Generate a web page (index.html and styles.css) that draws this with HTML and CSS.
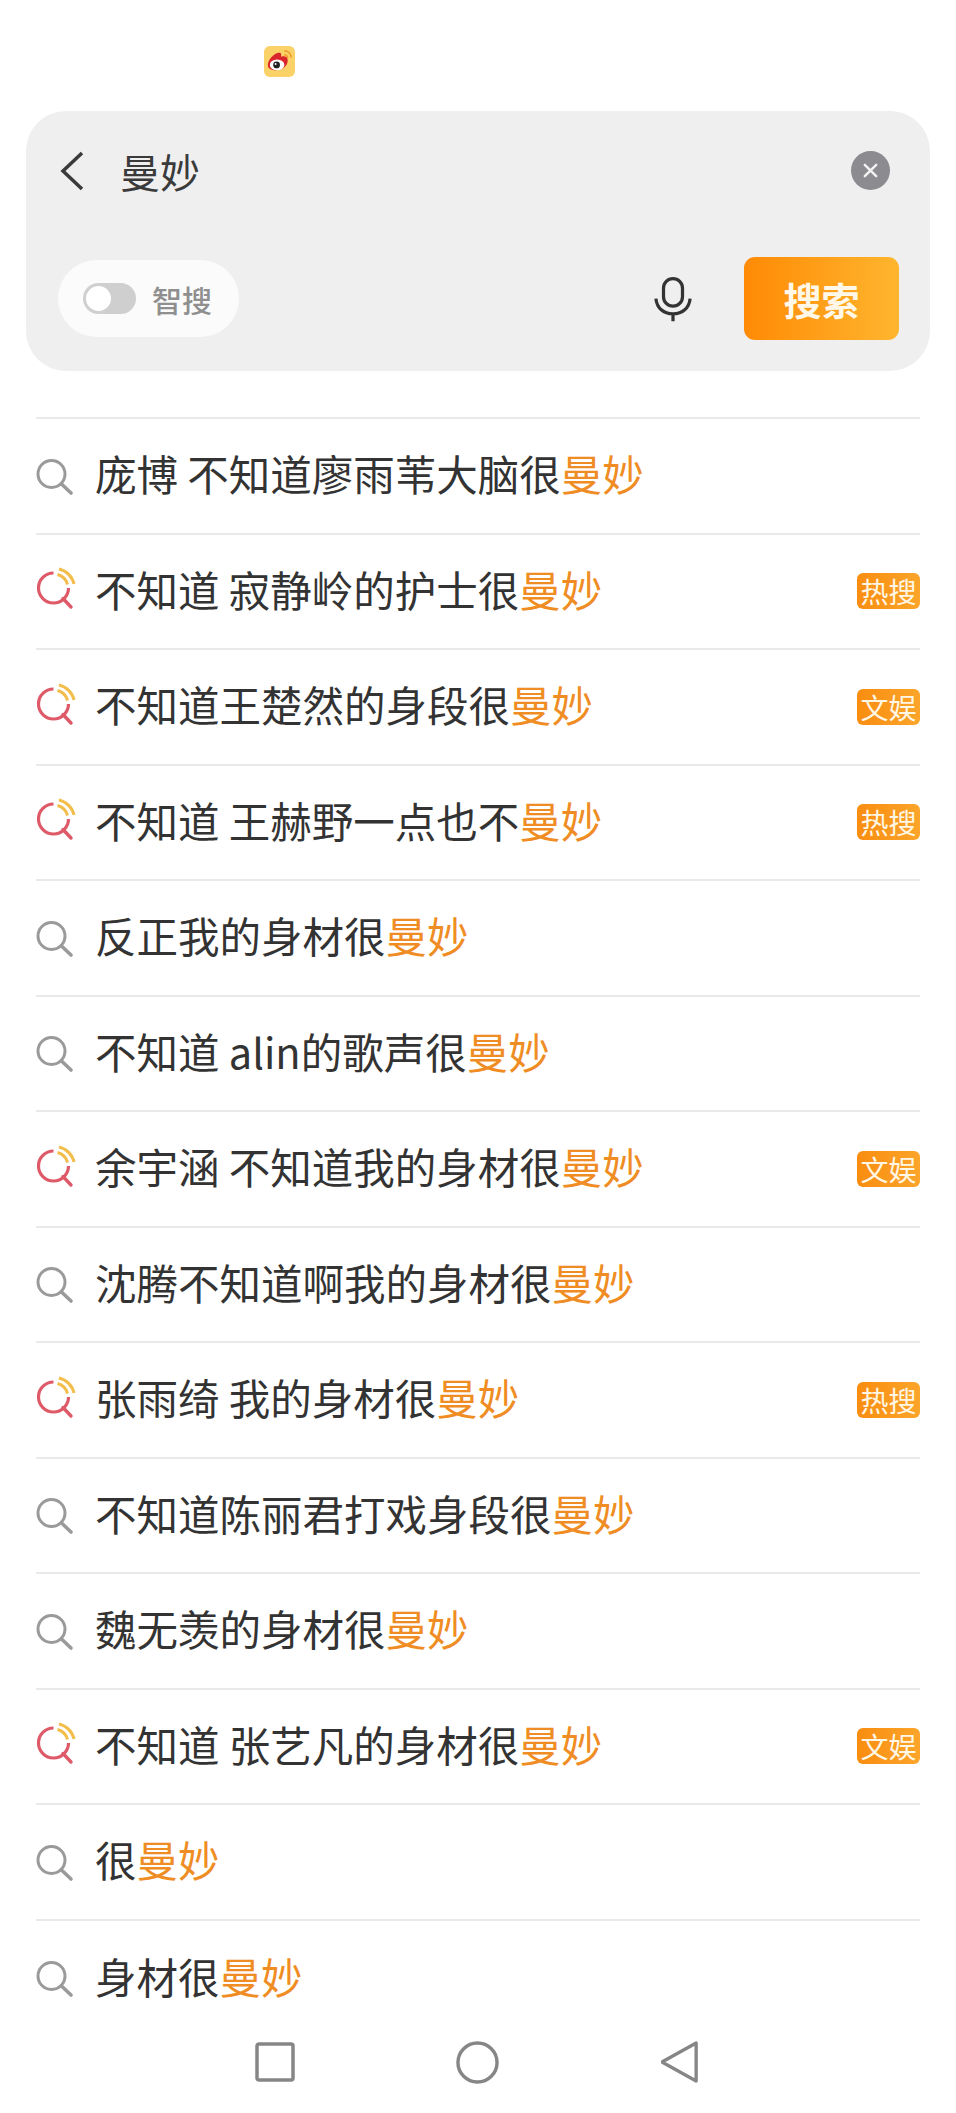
FILE: index.html
```html
<!DOCTYPE html>
<html lang="zh-CN">
<head>
    <meta charset="UTF-8">
    <meta name="viewport" content="width=device-width, initial-scale=1.0">
    <title>微博搜索</title>
    <link rel="stylesheet" href="styles.css">
</head>
<body>
    <svg class="defs" width="0" height="0">
        <symbol id="plain" viewBox="0 0 40 40">
            <circle cx="15.500" cy="18" r="13.500" fill="none" stroke="#9a9a9a" stroke-width="3"/>
            <path d="M25.500 28l9.500 9" stroke="#9a9a9a" stroke-width="3.600" stroke-linecap="round"/>
        </symbol>
        <symbol id="hot" viewBox="0 0 40 40" overflow="visible">
            <path d="M17.500 2a15 15 0 1 0 15 15" fill="none" stroke="#de5a68" stroke-width="3.200"/>
            <path d="M27 27.500l8 8.500" stroke="#de5a68" stroke-width="3.400" stroke-linecap="round"/>
            <path d="M23 -2a20 20 0 0 1 15 15" fill="none" stroke="#f2bd4a" stroke-width="3"/>
            <path d="M21.500 3.500a14 14 0 0 1 10 10" fill="none" stroke="#f2bd4a" stroke-width="3"/>
        </symbol>
    </svg>

    <div class="status">
        <svg class="app-logo" viewBox="0 0 32 32">
            <rect width="32" height="32" rx="6" fill="#fbd267"/>
            <path d="M4 20c0-6 6-12 11-13 3-.5 3 2 2.500 4 4-1 7 0 7 4 0 6-6 10-12 10-5 0-8.500-2-8.500-5z" fill="#d9262c"/>
            <ellipse cx="13.500" cy="19.500" rx="7.500" ry="5.500" fill="#fff"/>
            <circle cx="13" cy="19.500" r="3.500" fill="#222"/>
            <circle cx="12" cy="18.500" r="1" fill="#fff"/>
            <path d="M21 5a7 7 0 0 1 7 7M21 9a3.500 3.500 0 0 1 3.500 3.500" fill="none" stroke="#ef9a2c" stroke-width="1.500"/>
        </svg>
    </div>

    <div class="search-panel">
        <div class="query-row">
            <svg class="back" viewBox="0 0 26 40"><path d="M24 2L5 20l19 18" fill="none" stroke="#3a3a3a" stroke-width="3.500"/></svg>
            <div class="query">曼妙</div>
            <div class="clear">
                <svg viewBox="0 0 20 20"><path d="M4 4l12 12M16 4L4 16" stroke="#f2f2f2" stroke-width="2.600" stroke-linecap="round"/></svg>
            </div>
        </div>
        <div class="action-row">
            <div class="smart">
                <span class="toggle"><span class="knob"></span></span>
                <span class="smart-label">智搜</span>
            </div>
            <svg class="mic" viewBox="0 0 40 48">
                <rect x="10" y="2" width="20" height="29" rx="10" fill="none" stroke="#333" stroke-width="3.400"/>
                <path d="M2 23c1 10 8 16 18 16s17-6 18-16M20 39v8" fill="none" stroke="#333" stroke-width="3.400"/>
            </svg>
            <div class="search-btn">搜索</div>
        </div>
    </div>

    <ul class="list">
        <li class="row"><svg class="ico"><use href="#plain"/></svg><span class="text">庞博 不知道廖雨苇大脑很<em>曼妙</em></span></li>
        <li class="row"><svg class="ico"><use href="#hot"/></svg><span class="text">不知道 寂静岭的护士很<em>曼妙</em></span><span class="tag">热搜</span></li>
        <li class="row"><svg class="ico"><use href="#hot"/></svg><span class="text">不知道王楚然的身段很<em>曼妙</em></span><span class="tag">文娱</span></li>
        <li class="row"><svg class="ico"><use href="#hot"/></svg><span class="text">不知道 王赫野一点也不<em>曼妙</em></span><span class="tag">热搜</span></li>
        <li class="row"><svg class="ico"><use href="#plain"/></svg><span class="text">反正我的身材很<em>曼妙</em></span></li>
        <li class="row"><svg class="ico"><use href="#plain"/></svg><span class="text">不知道 alin的歌声很<em>曼妙</em></span></li>
        <li class="row"><svg class="ico"><use href="#hot"/></svg><span class="text">余宇涵 不知道我的身材很<em>曼妙</em></span><span class="tag">文娱</span></li>
        <li class="row"><svg class="ico"><use href="#plain"/></svg><span class="text">沈腾不知道啊我的身材很<em>曼妙</em></span></li>
        <li class="row"><svg class="ico"><use href="#hot"/></svg><span class="text">张雨绮 我的身材很<em>曼妙</em></span><span class="tag">热搜</span></li>
        <li class="row"><svg class="ico"><use href="#plain"/></svg><span class="text">不知道陈丽君打戏身段很<em>曼妙</em></span></li>
        <li class="row"><svg class="ico"><use href="#plain"/></svg><span class="text">魏无羡的身材很<em>曼妙</em></span></li>
        <li class="row"><svg class="ico"><use href="#hot"/></svg><span class="text">不知道 张艺凡的身材很<em>曼妙</em></span><span class="tag">文娱</span></li>
        <li class="row"><svg class="ico"><use href="#plain"/></svg><span class="text">很<em>曼妙</em></span></li>
        <li class="row"><svg class="ico"><use href="#plain"/></svg><span class="text">身材很<em>曼妙</em></span></li>
    </ul>

    <div class="navbar">
        <svg class="nav-square" viewBox="0 0 40 40"><rect x="2" y="2" width="36" height="36" rx="2" fill="none" stroke="#868686" stroke-width="3.500"/></svg>
        <svg class="nav-circle" viewBox="0 0 44 44"><circle cx="22" cy="22" r="20" fill="none" stroke="#868686" stroke-width="3.500"/></svg>
        <svg class="nav-back" viewBox="0 0 40 44"><path d="M37 2v40L1 22z" fill="none" stroke="#868686" stroke-width="3.500" stroke-linejoin="round"/></svg>
    </div>
</body>
</html>
```

FILE: styles.css
```css
* {
    margin: 0;
    padding: 0;
    box-sizing: border-box;
}

body {
    width: 956px;
    height: 2113px;
    overflow: hidden;
    background: #fff;
    font-family: "Noto Sans CJK SC", "Noto Sans", sans-serif;
    color: #333;
}

.defs {
    display: block;
    height: 0;
}

.status {
    height: 111px;
    padding: 46px 0 0 264px;
}

.app-logo {
    display: block;
    width: 31px;
    height: 31px;
}

.search-panel {
    width: 904px;
    height: 260px;
    margin-left: 26px;
    padding: 36px 31px 0 31px;
    background: #efefef;
    border-radius: 40px;
}

.query-row {
    display: flex;
    align-items: center;
    height: 48px;
}

.back {
    width: 26px;
    height: 40px;
    margin-left: 1px;
}

.query {
    flex: 1;
    margin-left: 36px;
    font-size: 40px;
    line-height: 48px;
    color: #3a3a3a;
}

.clear {
    display: flex;
    align-items: center;
    justify-content: center;
    width: 39px;
    height: 39px;
    margin-right: 9px;
    margin-top: -1px;
    border-radius: 50%;
    background: #8b8b90;
}

.clear svg {
    width: 19px;
    height: 19px;
}

.action-row {
    display: flex;
    align-items: center;
    margin-top: 62px;
}

.smart {
    display: flex;
    align-items: center;
    width: 181px;
    height: 77px;
    padding-left: 25px;
    margin-left: 1px;
    background: #fbfbfb;
    border-radius: 39px;
}

.toggle {
    display: block;
    width: 53px;
    height: 31px;
    padding: 3px;
    background: #cfcfcf;
    border-radius: 16px;
}

.knob {
    display: block;
    width: 25px;
    height: 25px;
    background: #fff;
    border-radius: 50%;
}

.smart-label {
    margin-left: 16px;
    font-size: 30px;
    font-weight: 500;
    color: #8f8f8f;
}

.mic {
    width: 38px;
    height: 47px;
    margin-left: auto;
    margin-top: 2px;
}

.search-btn {
    width: 155px;
    height: 83px;
    margin-left: 52px;
    background: linear-gradient(90deg, #ff8a05, #ffb52e);
    border-radius: 11px;
    color: #fff8e8;
    font-size: 38px;
    font-weight: 700;
    line-height: 83px;
    text-align: center;
}

.list {
    list-style: none;
    width: 884px;
    margin: 46px 0 0 36px;
    border-top: 2px solid #e9e9e9;
}

.row {
    display: flex;
    align-items: center;
    height: 115.5px;
    border-bottom: 2px solid #e9e9e9;
}

.row:last-child {
    border-bottom: none;
}

.ico {
    flex: none;
    width: 40px;
    height: 40px;
    overflow: visible;
}

.text {
    flex: 1;
    margin-left: 19px;
    margin-bottom: 5px;
    font-size: 41.5px;
    white-space: nowrap;
    color: #333;
}

.text em {
    font-style: normal;
    color: #ef8d24;
}

.tag {
    flex: none;
    width: 63px;
    height: 36px;
    background: linear-gradient(90deg, #f98d10, #fba52a);
    border-radius: 6px;
    color: #fff6e4;
    font-size: 28px;
    line-height: 36px;
    text-align: center;
}

.navbar {
    position: absolute;
    left: 0;
    top: 2040px;
    width: 956px;
    display: flex;
    align-items: center;
}

.nav-square {
    width: 40px;
    height: 40px;
    margin-left: 255px;
}

.nav-circle {
    width: 43px;
    height: 43px;
    margin-left: 161px;
}

.nav-back {
    width: 38px;
    height: 44px;
    margin-left: 162px;
}
```
